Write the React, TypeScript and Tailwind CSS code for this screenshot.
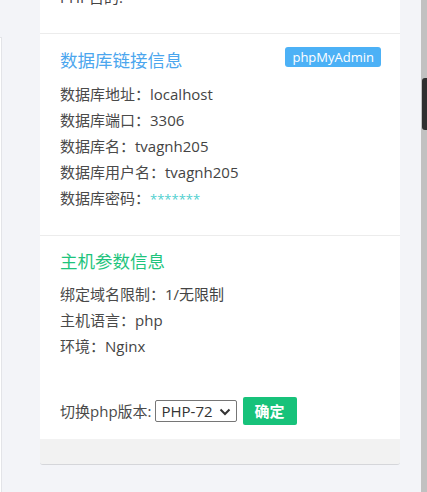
import React from 'react';

const dbRows: { label: string; value: string; secret?: boolean }[] = [
  { label: '数据库地址：', value: 'localhost' },
  { label: '数据库端口：', value: '3306' },
  { label: '数据库名：', value: 'tvagnh205' },
  { label: '数据库用户名：', value: 'tvagnh205' },
  { label: '数据库密码：', value: '*******', secret: true },
];

const hostRows = [
  { label: '绑定域名限制：', value: '1/无限制' },
  { label: '主机语言：', value: 'php' },
  { label: '环境：', value: 'Nginx' },
];

const App: React.FC = () => {
  return (
    <div
      className="flex h-[492px] w-[427px] overflow-hidden bg-[#f3f4f8] text-[15px] text-[#4a4a4a]"
      style={{ fontFamily: '"Open Sans", "Noto Sans CJK SC", sans-serif' }}
    >
      {/* edge of the side panel */}
      <div className="mt-[37px] w-[2px] border-t border-r border-[#e3e4e8] bg-white" />

      <div className="ml-[38px] flex w-[360px] flex-col">
        <div className="bg-white">
          {/* previous section, scrolled off */}
          <div className="-mt-[16px] h-[49px] px-5 leading-[26px] text-[#444]">PHP目的:</div>

          {/* database info */}
          <div className="border-t border-[#ececec] px-5 pt-[14px] pb-[23px]">
            <div className="flex items-start justify-between">
              <h2 className="text-[17.5px] leading-[24px] text-[#4ba6ee]">数据库链接信息</h2>
              <span className="mt-[-1px] mr-[-1px] rounded-[3px] bg-[#4cb1f6] px-[7px] text-[13px] leading-[20px] text-white">
                phpMyAdmin
              </span>
            </div>
            <div className="mt-[9px]">
              {dbRows.map((r) => (
                <div key={r.label} className="leading-[26px]">
                  {r.label}
                  <span className={r.secret ? 'text-[13px] text-[#4fcfcf]' : 'text-[#444]'}>{r.value}</span>
                </div>
              ))}
            </div>
          </div>

          {/* host info */}
          <div className="border-t border-[#ececec] px-5 pt-[13px] pb-[14px]">
            <h2 className="text-[17.5px] leading-[24px] text-[#1ec47d]">主机参数信息</h2>
            <div className="mt-[8px]">
              {hostRows.map((r) => (
                <div key={r.label} className="leading-[26px]">
                  {r.label}
                  <span className="text-[#444]">{r.value}</span>
                </div>
              ))}
            </div>

            <div className="mt-[38px] flex items-center">
              <span>切换php版本:</span>
              <div className="relative ml-[3px] flex h-[22px] w-[82px] items-center rounded-[2px] border border-[#767676] pl-[6px] text-[#333]">
                <span className="leading-[20px]">PHP-72</span>
                <svg className="absolute right-[5px] top-[7px]" width="12" height="8" viewBox="0 0 12 8">
                  <polyline points="1.5,1.5 6,6 10.5,1.5" fill="none" stroke="#333" strokeWidth="2" />
                </svg>
              </div>
              <button className="ml-[6px] h-[28px] w-[54px] rounded-[2px] bg-[#17c27a] font-bold text-white">
                确定
              </button>
            </div>
          </div>
        </div>

        <div className="h-[26px] rounded-b-[3px] border-b border-[#d5d6da] bg-[#f2f2f2]" />
      </div>

      <div className="flex-1" />

      {/* scrollbar */}
      <div className="flex w-[6px] flex-col items-end bg-[#c1c1c1]">
        <div className="mt-[78px] h-[52px] w-[5px] rounded-l-[3px] bg-[#2f2f2f]" />
      </div>
    </div>
  );
};

export default App;
